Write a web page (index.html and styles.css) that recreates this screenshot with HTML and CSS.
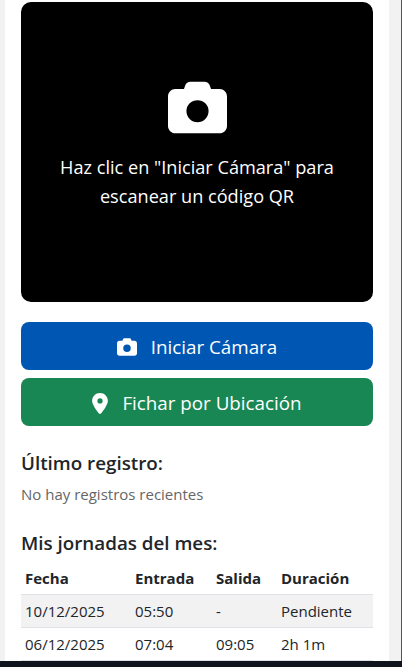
FILE: index.html
```html
<!DOCTYPE html>
<html lang="es">
    <head>
        <meta charset="UTF-8" />
        <title>Fichaje</title>
        <link rel="stylesheet" href="styles.css">
    </head>
    <body>
        <div class="window">
            <div class="page">
                <main class="card">
                    <div class="scanner">
                        <svg class="scanner-icon" viewBox="0 0 512 512" aria-hidden="true">
                            <path d="M149.1 64.8L138.7 96H64C28.7 96 0 124.7 0 160V416c0 35.3 28.7 64 64 64H448c35.3 0 64-28.7 64-64V160c0-35.3-28.7-64-64-64H373.3L362.9 64.8C356.4 45.2 338.1 32 317.4 32H194.6c-20.7 0-39 13.2-45.5 32.8zM256 192a96 96 0 1 1 0 192 96 96 0 1 1 0-192z" />
                        </svg>
                        <p>Haz clic en "Iniciar Cámara" para escanear un código QR</p>
                    </div>

                    <button class="btn btn-blue" type="button">
                        <svg class="btn-icon" viewBox="0 0 512 512" aria-hidden="true">
                            <path d="M149.1 64.8L138.7 96H64C28.7 96 0 124.7 0 160V416c0 35.3 28.7 64 64 64H448c35.3 0 64-28.7 64-64V160c0-35.3-28.7-64-64-64H373.3L362.9 64.8C356.4 45.2 338.1 32 317.4 32H194.6c-20.7 0-39 13.2-45.5 32.8zM256 192a96 96 0 1 1 0 192 96 96 0 1 1 0-192z" />
                        </svg>
                        Iniciar Cámara
                    </button>
                    <button class="btn btn-green" type="button">
                        <svg class="btn-icon pin" viewBox="0 0 384 512" aria-hidden="true">
                            <path d="M215.7 499.2C267 435 384 279.4 384 192C384 86 298 0 192 0S0 86 0 192c0 87.4 117 243 168.3 307.2c12.3 15.3 35.1 15.3 47.4 0zM192 256a64 64 0 1 1 0-128 64 64 0 1 1 0 128z" />
                        </svg>
                        Fichar por Ubicación
                    </button>

                    <h2 class="last-title">Último registro:</h2>
                    <p class="muted">No hay registros recientes</p>

                    <h2 class="month-title">Mis jornadas del mes:</h2>
                    <table class="shifts">
                        <colgroup>
                            <col class="col-date" />
                            <col class="col-in" />
                            <col class="col-out" />
                            <col class="col-time" />
                        </colgroup>
                        <thead>
                            <tr>
                                <th>Fecha</th>
                                <th>Entrada</th>
                                <th>Salida</th>
                                <th>Duración</th>
                            </tr>
                        </thead>
                        <tbody>
                            <tr class="striped">
                                <td>10/12/2025</td>
                                <td>05:50</td>
                                <td>-</td>
                                <td>Pendiente</td>
                            </tr>
                            <tr>
                                <td>06/12/2025</td>
                                <td>07:04</td>
                                <td>09:05</td>
                                <td>2h 1m</td>
                            </tr>
                        </tbody>
                    </table>
                </main>
            </div>
            <div class="taskbar"></div>
        </div>
    </body>
</html>
```

FILE: styles.css
```css
html,
body {
    height: 100%;
    margin: 0;
}
body {
    font-family: "Open Sans", "Noto Sans", Arial, sans-serif;
    color: #212529;
    background: #f2f2f2;
    overflow: hidden;
}
.window {
    height: 667px;
    display: flex;
    flex-direction: column;
}
.page {
    flex: 1;
    min-height: 0;
    overflow: hidden;
    padding: 0 12px 0 5px;
    border-right: 1px solid #555;
    background: #f2f2f2;
}
.taskbar {
    height: 6px;
    background: #10141f;
}
.card {
    background: #fff;
    padding: 2px 16px 0;
    height: 100%;
    box-sizing: border-box;
}
.scanner {
    height: 300px;
    background: #000;
    border-radius: 10px;
    color: #fff;
    display: flex;
    flex-direction: column;
    align-items: center;
    justify-content: center;
    text-align: center;
    padding: 0 16px 15px;
    box-sizing: border-box;
}
.scanner-icon {
    width: 59px;
    height: 59px;
    fill: #fff;
    margin-bottom: 16px;
}
.scanner p {
    margin: 0;
    font-size: 18.15px;
    line-height: 29px;
}
.btn {
    display: flex;
    align-items: center;
    justify-content: center;
    gap: 14px;
    width: 100%;
    height: 48px;
    margin-top: 8px;
    padding: 2px 0 0;
    border: none;
    border-radius: 8px;
    color: #fff;
    font-family: inherit;
    font-size: 18.8px;
    cursor: pointer;
}
.btn-blue {
    background: #0056b3;
    margin-top: 20px;
}
.btn-green {
    background: #198754;
}
.btn-icon {
    width: 20px;
    height: 20px;
    fill: #fff;
}
.btn-icon.pin {
    width: 16px;
    height: 21px;
}
h2 {
    margin: 0;
    font-size: 18.8px;
    font-weight: 600;
    line-height: 22px;
}
.last-title {
    margin-top: 26px;
}
.muted {
    margin: 9px 0 0;
    font-size: 15px;
    line-height: 22px;
    color: #666;
}
.month-title {
    margin-top: 27px;
}
.shifts {
    width: 352px;
    margin-top: 8px;
    border-collapse: collapse;
    table-layout: fixed;
    font-size: 15px;
}
.col-date {
    width: 110px;
}
.col-in {
    width: 81px;
}
.col-out {
    width: 65px;
}
.col-time {
    width: 96px;
}
.shifts th,
.shifts td {
    padding: 0 4px;
    height: 32px;
    text-align: left;
    white-space: nowrap;
    border-bottom: 1px solid #dee2e6;
}
.shifts th {
    font-weight: 700;
}
.striped td {
    background: #f2f2f2;
}
```
